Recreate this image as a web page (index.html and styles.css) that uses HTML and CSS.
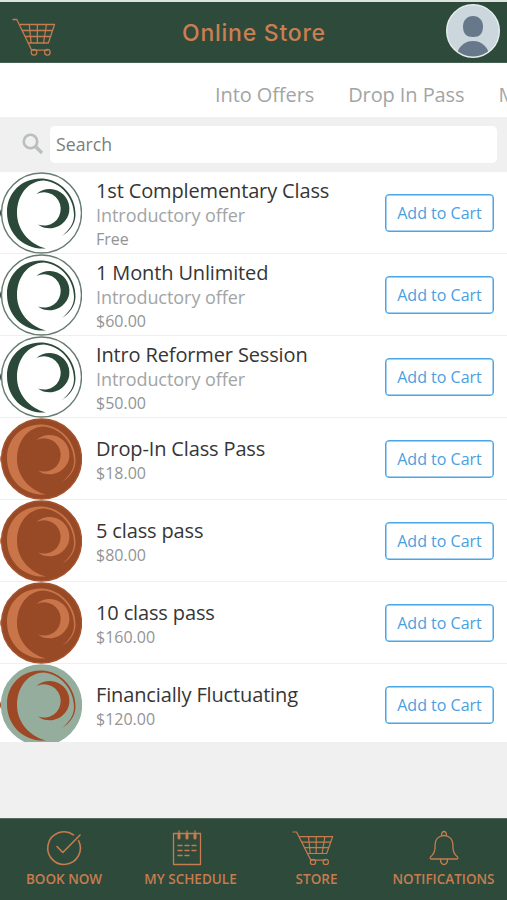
FILE: index.html
```html
<!DOCTYPE html>
<html lang="en">
<head>
<meta charset="utf-8">
<title>Online Store</title>
<link rel="stylesheet" href="styles.css">
</head>
<body>
<svg class="defs" width="0" height="0">
  <symbol id="cart" viewBox="0 0 46 38">
    <path d="M1 1.500H5L20.500 32M8.500 6.500H44.500L38 25H17.500M11 12.500H42.500M14 18.500H40.500M18 6.500L20 25M26.500 6.500V25M36 6.500L33 25M20.500 32.200H37"/>
    <circle cx="23" cy="34.200" r="2.900"/><circle cx="37" cy="34.200" r="2.900"/>
  </symbol>
  <symbol id="logo" viewBox="0 0 82 82">
    <circle class="disc" cx="41.500" cy="41" r="40"/>
    <path class="mark" d="M0 37Q2 41 0 45Z"/>
    <path class="mark" d="M46 76.500C24 78 7 62 7 40C7 19 24 5 43 6.500C61 8 76 24 75.500 43C75.200 52 70 59 62 64C69 58 74 52 74 43C74 25 60 10 44 8.500C27 9 17 24 17 41C17 58 29 72 46 76.500Z"/>
    <path class="mark" d="M36.500 22A19.700 19.700 0 1 1 38 52.500A16.700 16.700 0 1 0 36.500 22Z"/>
  </symbol>
</svg>
<header class="top">
  <svg class="top-cart line" width="44" height="38" viewBox="0 0 46 38" preserveAspectRatio="none"><use href="#cart" width="46" height="38"/></svg>
  <h1>Online Store</h1>
  <svg class="avatar" viewBox="0 0 54 54">
    <defs><clipPath id="face"><circle cx="27" cy="27" r="25.500"/></clipPath></defs>
    <circle cx="27" cy="27" r="26.300" fill="#ccd6dd" stroke="#e6efef" stroke-width="1.400"/>
    <g clip-path="url(#face)" fill="#68788b">
      <path d="M27 12C33 12 37 16.500 37 22.500C37 30 33.500 33 27 33C20.500 33 17 30 17 22.500C17 16.500 21 12 27 12Z"/>
      <ellipse cx="27" cy="52" rx="16" ry="15"/>
    </g>
  </svg>
</header>
<nav class="tabs"><span>Into Offers</span><span>Drop In Pass</span><span>M</span></nav>
<div class="search">
  <svg width="22" height="22" viewBox="0 0 22 22"><circle cx="8.500" cy="8.500" r="6.700"/><path d="M13.500 13.500L20 20"/></svg>
  <div class="field">Search</div>
</div>
<main>
  <article class="green"><svg class="logo"><use href="#logo"/></svg><div class="info"><h2>1st Complementary Class</h2><p class="kind">Introductory offer</p><p class="price">Free</p></div><button>Add to Cart</button></article>
  <article class="green"><svg class="logo"><use href="#logo"/></svg><div class="info"><h2>1 Month Unlimited</h2><p class="kind">Introductory offer</p><p class="price">$60.00</p></div><button>Add to Cart</button></article>
  <article class="green"><svg class="logo"><use href="#logo"/></svg><div class="info"><h2>Intro Reformer Session</h2><p class="kind">Introductory offer</p><p class="price">$50.00</p></div><button>Add to Cart</button></article>
  <article class="copper"><svg class="logo"><use href="#logo"/></svg><div class="info"><h2>Drop-In Class Pass</h2><p class="price">$18.00</p></div><button>Add to Cart</button></article>
  <article class="copper"><svg class="logo"><use href="#logo"/></svg><div class="info"><h2>5 class pass</h2><p class="price">$80.00</p></div><button>Add to Cart</button></article>
  <article class="copper"><svg class="logo"><use href="#logo"/></svg><div class="info"><h2>10 class pass</h2><p class="price">$160.00</p></div><button>Add to Cart</button></article>
  <article class="sage"><svg class="logo"><use href="#logo"/></svg><div class="info"><h2>Financially Fluctuating</h2><p class="price">$120.00</p></div><button>Add to Cart</button></article>
</main>
<footer>
  <a><svg class="line" width="36" height="36" viewBox="0 0 36 36"><path d="M27.500 4.800A16.300 16.300 0 1 0 32.500 10.500M11 16.500L16.800 22.500L34 5" stroke-width="1.600"/></svg><span>BOOK NOW</span></a>
  <a class="schedule"><svg class="line" width="30" height="36" viewBox="0 0 30 36"><path d="M1.500 3.500H28.500V34.500H1.500Z"/><path d="M7 1V7M15 1V7M23 1V7"/><path stroke-width="3" d="M7 5V8M15 5V8M23 5V8"/><path stroke-width="1.400" d="M6 15.500H10M13 15.500H17M20 15.500H24M6 20.500H10M13 20.500H17M20 20.500H24M6 25.500H10M13 25.500H17"/></svg><span>MY SCHEDULE</span></a>
  <a><svg class="line shop" width="42" height="36"><use href="#cart"/></svg><span>STORE</span></a>
  <a><svg class="line" width="32" height="36" viewBox="0 0 32 36"><path d="M13.500 6C7 8 7 13 7 18C7 23 5 24.500 2.500 27Q1.500 29 3.500 29H28.500Q30.500 29 29.500 27C27 24.500 25 23 25 18C25 13 25 8 18.500 6M13.500 6C13 0 19 0 18.500 6Q16 5 13.500 6M12.500 29C12 36.500 20 36.500 19.500 29"/></svg><span>NOTIFICATIONS</span></a>
</footer>
</body>
</html>
```
FILE: styles.css
```css
* { box-sizing: border-box; }
body {
  margin: 0;
  width: 507px;
  height: 900px;
  overflow: hidden;
  display: flex;
  flex-direction: column;
  background: #f0f0f0;
  border-top: 2px solid #dde3de;
  font-family: "Open Sans", sans-serif;
}
.defs { position: absolute; }
h1, h2, p { margin: 0; font-weight: 400; white-space: nowrap; }
.line { fill: none; stroke: #c67c4e; stroke-width: 1.3; stroke-linecap: round; stroke-linejoin: round; }
.top {
  height: 61px;
  flex: none;
  background: #2e4a3b;
  display: grid;
  grid-template-columns: 170px 1fr 61px;
  align-items: center;
  border-bottom: 1px solid #456052;
}
.top-cart { margin: 9px 0 0 12px; }
h1 { font: 500 23px/30px "Inter", sans-serif; color: #cb7f51; margin: 1px 0 0 12px; letter-spacing: 0.75px; }
.avatar { width: 54px; height: 54px; margin-top: -2px; }
.tabs {
  height: 54px;
  flex: none;
  background: #fff;
  display: flex;
  gap: 34px;
  padding: 17px 0 0 215px;
  overflow: hidden;
  font-size: 20px;
  line-height: 30px;
  letter-spacing: -0.09px;
  color: #a2a5a5;
  white-space: nowrap;
}
.search {
  height: 55px;
  flex: none;
  display: flex;
  padding: 9px 10px 9px 22px;
}
.search svg { margin: 7px 6px 0 0; fill: none; stroke: #b9bfbf; stroke-width: 2.6; }
.search path { stroke-width: 3.4; }
.field {
  flex: 1;
  height: 37px;
  border-radius: 5px;
  background: #fff;
  padding-left: 6px;
  font-size: 17.7px;
  line-height: 36px;
  color: #7b7d7d;
}
main { height: 570px; overflow: hidden; flex: none; background: #fff; }
article {
  height: 82px;
  display: flex;
  align-items: center;
  border-bottom: 1px solid #edf0ef;
  padding-right: 13px;
}
.logo { width: 82px; height: 82px; flex: none; margin-right: 14px; }
.info { flex: 1; padding-top: 3px; }
h2 { font-size: 20px; line-height: 25px; letter-spacing: -0.14px; color: #363636; }
.kind { font-size: 18px; line-height: 24px; letter-spacing: -0.05px; color: #a2a5a6; }
.price { font-size: 16px; line-height: 24px; color: #929495; }
button {
  width: 109px;
  height: 38px;
  padding: 0;
  border: 1.5px solid #49a5e5;
  border-radius: 4px;
  background: #fff;
  font: 16px/24px "Open Sans", sans-serif;
  color: #49a0e0;
  box-shadow: inset 0 0 0 0.5px #49a5e5;
}
.disc { stroke-width: 1.4; }
.green { color: #2b4939; fill: #fff; stroke: #667c70; }
.copper { color: #c97549; fill: #984a27; stroke: #a5522c; }
.sage { color: #9f4825; fill: #94ad9d; stroke: #94ad9d; }
.mark { fill: currentColor; stroke: none; }
footer {
  margin-top: auto;
  height: 82px;
  flex: none;
  background: #2e4a3b;
  border-top: 1px solid #55695e;
  display: grid;
  grid-template-columns: 128px 125px 127px 127px;
}
footer a {
  display: flex;
  flex-direction: column;
  align-items: center;
  padding-top: 11px;
  font-size: 13.5px;
  font-weight: 600;
  line-height: 20px;
  color: #c67c4e;
  white-space: nowrap;
}
.schedule svg { margin-left: -8px; }
.shop { margin-left: -8px; }
footer span { margin-top: 3px; }
```
